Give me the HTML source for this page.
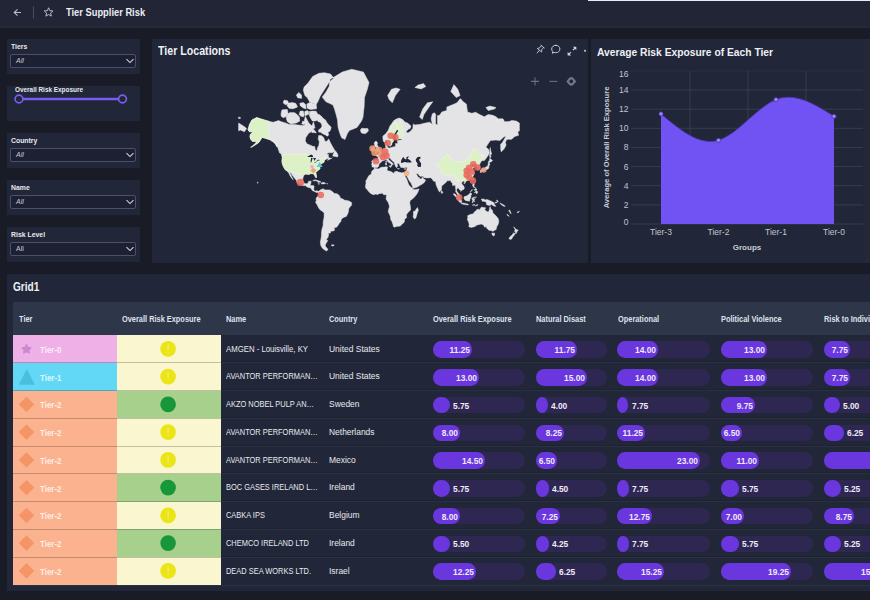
<!DOCTYPE html><html><head><meta charset="utf-8"><style>
*{margin:0;padding:0;box-sizing:border-box}
html,body{width:870px;height:600px;overflow:hidden;background:#191c26;font-family:"Liberation Sans", sans-serif;color:#e6e8ee}
.a{position:absolute}
svg text{font-family:"Liberation Sans",sans-serif}
.t{position:absolute;white-space:nowrap;transform-origin:0 50%}
</style></head><body><div class="a" style="left:0px;top:0px;width:870px;height:27px;background:#212535;"></div>
<div class="a" style="left:0px;top:26px;width:870px;height:1.5px;background:#262a36;"></div>
<div class="a" style="left:588px;top:0px;width:282px;height:1px;background:#e9ebf0;"></div>
<svg class="a" style="left:0;top:0" width="160" height="27">
<path d="M21 12.5 H14.5 M17.5 9.3 L14.2 12.5 L17.5 15.7" stroke="#b8bcc8" stroke-width="1.1" fill="none"/>
<line x1="33.5" y1="6.5" x2="33.5" y2="18.5" stroke="#4a4f60" stroke-width="1"/>
<path d="M48.60 7.80 L49.83 10.70 L52.97 10.98 L50.60 13.05 L51.30 16.12 L48.60 14.50 L45.90 16.12 L46.60 13.05 L44.23 10.98 L47.37 10.70 Z" stroke="#b8bcc8" stroke-width="1" fill="none" stroke-linejoin="round"/>
</svg>
<div class="t" style="left:65.8px;top:5.12px;font-size:11.8px;line-height:14.16px;font-weight:bold;font-style:normal;color:#eceef3;transform:scaleX(0.79);">Tier Supplier Risk</div>
<div class="a" style="left:7px;top:39px;width:133px;height:35px;background:#212638;"></div>
<div class="t" style="left:11px;top:41.70px;font-size:8px;line-height:9.60px;font-weight:bold;font-style:normal;color:#e8eaf0;transform:scaleX(0.86);">Tiers</div>
<div class="a" style="left:10px;top:54px;width:126px;height:14px;border:1px solid #4b5168;border-radius:2px;background:#1c2032"></div>
<div class="t" style="left:16px;top:57.10px;font-size:7px;line-height:8.40px;font-weight:normal;font-style:italic;color:#c9ccd6;">All</div>
<svg class="a" style="left:124px;top:57px" width="12" height="8"><path d="M2.5 2.2 L6 5.6 L9.5 2.2" stroke="#d0d3dc" stroke-width="1.1" fill="none"/></svg>
<div class="a" style="left:7px;top:86px;width:133px;height:35px;background:#212638;"></div>
<div class="t" style="left:14.7px;top:85.40px;font-size:8px;line-height:9.60px;font-weight:bold;font-style:normal;color:#e8eaf0;transform:scaleX(0.8);">Overall Risk Exposure</div>
<svg class="a" style="left:7px;top:86px" width="133" height="35">
<line x1="12" y1="13" x2="115.5" y2="13" stroke="#7a5cf0" stroke-width="2.6"/>
<circle cx="12" cy="13" r="3.9" fill="#212638" stroke="#7a5cf0" stroke-width="1.7"/>
<circle cx="115.5" cy="13" r="3.9" fill="#212638" stroke="#7a5cf0" stroke-width="1.7"/>
</svg>
<div class="a" style="left:7px;top:133px;width:133px;height:35px;background:#212638;"></div>
<div class="t" style="left:11px;top:135.70px;font-size:8px;line-height:9.60px;font-weight:bold;font-style:normal;color:#e8eaf0;transform:scaleX(0.86);">Country</div>
<div class="a" style="left:10px;top:148px;width:126px;height:14px;border:1px solid #4b5168;border-radius:2px;background:#1c2032"></div>
<div class="t" style="left:16px;top:151.10px;font-size:7px;line-height:8.40px;font-weight:normal;font-style:italic;color:#c9ccd6;">All</div>
<svg class="a" style="left:124px;top:151px" width="12" height="8"><path d="M2.5 2.2 L6 5.6 L9.5 2.2" stroke="#d0d3dc" stroke-width="1.1" fill="none"/></svg>
<div class="a" style="left:7px;top:180px;width:133px;height:35px;background:#212638;"></div>
<div class="t" style="left:11px;top:182.70px;font-size:8px;line-height:9.60px;font-weight:bold;font-style:normal;color:#e8eaf0;transform:scaleX(0.86);">Name</div>
<div class="a" style="left:10px;top:195px;width:126px;height:14px;border:1px solid #4b5168;border-radius:2px;background:#1c2032"></div>
<div class="t" style="left:16px;top:198.10px;font-size:7px;line-height:8.40px;font-weight:normal;font-style:italic;color:#c9ccd6;">All</div>
<svg class="a" style="left:124px;top:198px" width="12" height="8"><path d="M2.5 2.2 L6 5.6 L9.5 2.2" stroke="#d0d3dc" stroke-width="1.1" fill="none"/></svg>
<div class="a" style="left:7px;top:227px;width:133px;height:35px;background:#212638;"></div>
<div class="t" style="left:11px;top:229.70px;font-size:8px;line-height:9.60px;font-weight:bold;font-style:normal;color:#e8eaf0;transform:scaleX(0.86);">Risk Level</div>
<div class="a" style="left:10px;top:242px;width:126px;height:14px;border:1px solid #4b5168;border-radius:2px;background:#1c2032"></div>
<div class="t" style="left:16px;top:245.10px;font-size:7px;line-height:8.40px;font-weight:normal;font-style:normal;color:#c9ccd6;">All</div>
<svg class="a" style="left:124px;top:245px" width="12" height="8"><path d="M2.5 2.2 L6 5.6 L9.5 2.2" stroke="#d0d3dc" stroke-width="1.1" fill="none"/></svg>
<div class="a" style="left:152px;top:39px;width:436px;height:224px;background:#212638;"></div>
<div class="t" style="left:158.3px;top:43.20px;font-size:13px;line-height:15.60px;font-weight:bold;font-style:normal;color:#eef0f4;transform:scaleX(0.818);">Tier Locations</div>
<svg class="a" style="left:520px;top:38px" width="70" height="60">
<g stroke="#c8ccd6" stroke-width="1" fill="none" stroke-linejoin="round" stroke-linecap="round">
<g transform="translate(20,11.6) rotate(40) scale(0.85)"><path d="M-2.6,-4.6 H2.6 M-1.7,-4.6 V-1.2 L-3.3,1 H3.3 L1.7,-1.2 V-4.6 M0,1 V5.2"/></g>
<path d="M35.8,7.3 C38.3,7.3 39.9,9 39.9,11 C39.9,13.1 38.2,14.7 35.8,14.7 C35.2,14.7 34.6,14.6 34.1,14.4 L32.3,15.3 L32.8,13.6 C32.1,12.9 31.7,12 31.7,11 C31.7,9 33.3,7.3 35.8,7.3 Z"/>
</g>
<g stroke="#d0d3dc" stroke-width="1.2" fill="none">
<path d="M52.9,12.2 L55.3,9.8"/><path d="M48.5,16.6 L50.9,14.2"/>
</g>
<path d="M56.3,8.8 L56.3,12.3 L52.8,8.8 Z" fill="#d0d3dc"/>
<path d="M47.6,17.5 L47.6,14 L51.1,17.5 Z" fill="#d0d3dc"/>
<circle cx="65" cy="12.8" r="1" fill="#c8ccd6"/>
<g stroke="#6b7082" stroke-width="1.1" fill="none">
<path d="M11,43.4 H19 M15,39.4 V47.4"/>
<path d="M49.3,43.4 H57.3" transform="translate(-20,0)"/>
</g>
<path d="M46.3,43.4 L49,40 Q51.25,38.2 53.5,40 L56.2,43.4 L53.5,46.8 Q51.25,48.6 49,46.8 Z" fill="#70758a"/>
<circle cx="51.25" cy="43.4" r="1.8" fill="#212638"/>
</svg>
<svg class="a" style="left:0;top:0" width="870" height="270">
<path d="M248.0,129.8 L249.5,124.4 L251.9,120.0 L256.7,117.6 L260.4,118.8 L265.9,120.4 L269.0,121.3 L272.9,122.2 L274.9,121.8 L278.4,120.6 L281.5,121.8 L285.4,122.9 L289.3,124.6 L294.8,124.6 L297.9,125.0 L302.6,125.4 L304.9,125.0 L304.1,121.8 L305.3,116.3 L306.9,119.5 L308.8,122.9 L311.9,126.0 L313.5,121.8 L315.0,128.0 L312.7,129.0 L311.1,131.8 L308.4,133.6 L305.7,137.8 L305.3,140.9 L306.9,143.8 L310.4,145.2 L312.7,146.3 L314.8,146.6 L315.0,149.3 L317.0,151.2 L317.4,148.0 L318.9,145.2 L319.3,141.6 L318.2,139.3 L318.6,135.6 L321.3,135.6 L323.6,137.4 L324.8,140.9 L326.7,141.6 L328.7,138.9 L330.6,143.1 L332.2,145.9 L334.5,149.9 L335.3,151.2 L332.2,152.8 L328.3,152.8 L326.4,153.9 L328.7,154.4 L328.3,155.6 L328.6,157.5 L331.4,158.5 L332.2,157.7 L331.8,158.3 L327.5,160.3 L328.7,158.3 L326.7,158.8 L324.4,160.1 L323.9,162.4 L321.3,163.5 L320.1,165.6 L319.7,167.1 L320.1,168.8 L318.2,170.2 L315.8,172.3 L316.4,176.3 L316.3,177.9 L315.2,176.6 L314.3,174.5 L313.1,173.7 L309.6,173.5 L309.3,174.5 L305.7,174.0 L303.2,175.6 L302.9,178.1 L302.7,180.3 L304.1,183.1 L305.3,183.8 L308.0,183.4 L308.4,181.4 L311.1,181.0 L310.8,183.7 L310.1,185.6 L313.5,185.6 L314.1,186.4 L313.7,189.6 L315.0,191.2 L317.0,190.8 L318.6,191.4 L318.6,192.3 L316.6,192.5 L315.0,191.8 L312.2,190.4 L310.8,188.0 L307.6,187.2 L305.3,185.6 L303.7,185.8 L300.2,184.3 L296.7,182.3 L296.9,181.0 L295.9,179.8 L294.0,177.6 L292.4,175.6 L291.0,172.7 L289.7,172.3 L290.9,174.5 L291.6,176.8 L293.3,179.8 L291.6,178.2 L290.1,175.9 L289.3,174.1 L287.7,171.4 L285.0,169.5 L283.4,166.6 L282.3,163.7 L281.9,161.0 L282.3,157.5 L281.7,154.9 L283.1,154.8 L281.5,153.0 L279.2,151.8 L277.6,147.3 L275.3,143.8 L272.9,141.6 L269.8,139.7 L265.1,138.2 L262.0,137.4 L260.4,140.1 L258.9,142.4 L255.8,144.5 L252.6,146.6 L250.7,147.3 L252.6,145.9 L255.8,143.1 L256.5,141.3 L252.6,141.5 L250.7,139.3 L249.9,136.9 L250.3,134.4 L253.4,131.8 L249.5,131.8Z M322.4,96.8 L326.0,91.9 L329.1,86.5 L330.1,79.3 L336.1,75.8 L342.3,72.0 L351.7,69.3 L363.4,72.0 L369.0,82.6 L367.3,89.3 L364.5,97.5 L364.2,106.1 L363.0,117.1 L361.8,120.6 L359.5,123.9 L357.0,127.4 L353.3,129.0 L349.4,130.5 L347.4,133.6 L345.0,139.5 L341.6,137.8 L339.6,132.7 L338.1,127.4 L337.5,120.0 L336.1,114.6 L334.5,109.1 L333.0,105.1 L329.9,103.5 L326.0,101.8 L322.5,97.5Z M327.9,136.1 L328.7,134.4 L327.9,132.2 L329.9,131.2 L331.2,127.8 L330.2,126.0 L328.3,124.4 L326.4,121.8 L325.6,120.0 L323.6,118.8 L322.1,117.1 L319.7,114.8 L317.8,114.3 L316.2,111.3 L312.7,111.1 L309.2,111.6 L309.6,116.3 L311.1,119.0 L312.3,120.9 L315.0,121.1 L317.4,120.2 L318.2,121.8 L320.1,122.0 L321.7,124.4 L321.9,126.6 L320.5,128.6 L318.7,129.8 L318.6,132.0 L320.5,132.2 L323.2,134.1 L325.6,134.9 L326.7,136.0Z M333.8,78.2 L330.6,74.0 L324.4,72.7 L318.9,73.3 L312.7,76.4 L308.0,83.1 L304.1,87.0 L303.3,90.2 L304.9,95.6 L307.2,97.5 L309.6,101.8 L312.7,103.5 L316.6,103.8 L318.2,101.1 L320.1,96.4 L322.4,92.8 L325.2,88.4 L328.3,83.6 L331.4,79.9Z M316.6,108.8 L310.4,109.4 L307.2,108.2 L306.9,104.1 L309.6,102.5 L313.5,103.2 L316.2,103.8Z M299.8,121.1 L296.3,122.9 L290.9,123.9 L287.4,121.8 L286.2,118.3 L287.0,114.6 L290.1,112.4 L294.8,112.7 L297.1,114.6 L299.4,117.1Z M281.1,116.1 L283.1,117.8 L286.2,116.6 L288.1,113.8 L287.4,109.6 L284.6,109.4 L281.9,109.9 L281.1,113.3Z M297.5,107.0 L293.2,108.8 L289.3,108.5 L287.0,105.7 L287.7,103.2 L292.4,102.5 L295.9,103.5Z M303.7,116.8 L301.0,116.3 L299.1,114.6 L300.2,111.1 L303.3,111.1 L304.1,114.6Z M308.8,114.3 L304.9,115.8 L304.7,111.6 L307.2,110.5 L308.4,111.3Z M316.2,133.0 L313.9,132.5 L311.8,132.7 L311.9,130.1 L313.1,129.0 L315.4,131.2Z M306.1,108.8 L303.7,108.2 L300.2,105.7 L299.8,103.2 L303.3,102.5 L305.7,104.5Z M332.7,155.9 L337.7,156.9 L338.0,155.4 L337.3,153.6 L335.7,151.1 L334.1,152.2 L333.0,154.8Z M318.6,191.4 L320.1,190.0 L322.1,189.3 L323.2,188.5 L323.6,189.6 L326.0,190.0 L329.1,189.9 L330.8,190.4 L332.2,191.5 L334.5,193.5 L336.9,193.7 L338.8,194.9 L340.0,196.8 L340.4,198.2 L342.3,198.8 L344.7,200.2 L347.0,200.5 L349.0,201.1 L351.5,202.5 L351.7,204.9 L350.1,206.8 L348.7,208.8 L348.4,212.1 L347.4,214.5 L346.2,216.6 L343.9,217.2 L341.2,219.2 L341.0,221.4 L339.2,223.2 L337.7,226.0 L336.1,227.4 L334.1,227.4 L334.5,229.8 L334.1,230.8 L330.6,231.3 L330.5,232.9 L328.3,233.3 L328.7,234.7 L327.9,237.6 L326.4,239.3 L327.7,240.8 L326.0,243.4 L325.2,245.2 L325.6,246.5 L328.1,249.5 L326.5,251.0 L324.4,249.8 L322.4,248.2 L320.9,245.8 L320.3,242.2 L320.9,239.3 L321.4,236.0 L321.4,233.3 L321.8,229.8 L323.1,225.5 L323.2,221.4 L324.0,217.9 L324.2,212.9 L322.8,211.7 L319.7,209.4 L318.3,207.2 L317.0,204.5 L315.8,202.9 L315.7,201.6 L316.6,200.2 L315.9,199.0 L316.6,197.4 L317.5,196.8 L318.7,195.1 L318.6,193.1Z M374.4,168.3 L378.2,168.9 L381.3,167.3 L386.8,166.8 L387.6,167.1 L387.0,170.0 L387.7,170.7 L390.9,171.6 L393.8,173.4 L394.6,171.8 L396.9,171.3 L398.5,172.1 L401.6,172.8 L404.2,172.5 L405.7,172.5 L406.2,174.1 L405.8,175.6 L404.4,173.7 L405.1,176.3 L406.7,179.0 L408.1,183.1 L409.3,185.6 L411.0,187.2 L412.8,188.4 L412.7,189.2 L414.9,189.8 L419.0,188.9 L418.8,190.0 L417.2,193.5 L414.9,196.6 L412.5,199.0 L410.2,200.5 L409.7,202.9 L410.4,206.4 L410.6,210.0 L407.5,212.9 L406.3,215.0 L406.7,217.5 L404.6,219.2 L404.3,221.9 L402.4,224.1 L400.1,226.1 L396.2,226.5 L394.6,227.2 L393.4,226.5 L393.0,224.6 L391.9,221.5 L390.7,219.6 L390.3,216.2 L388.2,211.8 L388.8,208.8 L389.5,206.8 L388.5,202.9 L386.0,199.0 L386.4,196.2 L386.6,195.1 L385.6,194.7 L383.7,194.8 L382.5,193.3 L379.8,193.5 L377.4,194.5 L375.9,194.1 L373.1,194.8 L370.0,192.9 L368.7,191.5 L367.3,189.7 L366.0,188.4 L365.4,186.6 L366.1,182.7 L365.7,181.4 L367.5,178.1 L368.9,175.6 L371.2,174.3 L371.4,172.3 L372.4,170.6 L373.7,169.8Z M417.5,207.6 L418.4,210.4 L417.6,212.1 L416.4,216.2 L415.7,218.3 L414.1,218.8 L413.1,216.6 L413.6,214.1 L413.3,211.7 L415.3,210.7 L416.4,208.8Z M374.6,168.1 L373.9,167.3 L373.1,166.9 L372.0,167.1 L372.1,165.6 L371.6,164.6 L372.1,162.6 L371.7,161.0 L372.8,160.2 L375.9,160.6 L377.6,160.6 L378.1,158.8 L378.1,157.5 L377.1,156.2 L375.3,155.4 L376.7,154.5 L377.8,154.6 L377.8,153.4 L379.0,153.8 L380.2,152.8 L380.9,151.7 L382.1,151.2 L382.7,149.5 L383.7,148.6 L385.2,148.5 L385.8,147.3 L385.5,145.9 L385.4,143.8 L387.3,142.8 L387.1,145.0 L387.6,146.2 L387.2,147.4 L388.4,147.7 L389.9,148.1 L391.9,147.3 L393.4,146.9 L395.4,146.6 L395.5,144.5 L395.8,143.1 L396.9,143.8 L398.0,143.5 L397.3,141.6 L397.3,140.4 L400.8,140.1 L402.4,139.5 L401.6,139.0 L399.3,138.7 L396.8,139.3 L395.8,137.8 L396.0,135.3 L397.7,132.2 L398.7,130.9 L398.1,129.8 L396.6,129.8 L395.8,131.6 L394.6,133.2 L393.7,135.1 L393.0,137.8 L393.4,139.3 L393.4,140.9 L391.9,143.1 L391.5,145.0 L390.2,146.1 L389.1,145.8 L387.6,141.2 L387.2,140.1 L386.4,140.9 L384.5,142.4 L383.3,141.2 L382.9,138.6 L382.9,136.1 L384.5,134.8 L386.4,133.0 L388.4,129.9 L389.9,126.0 L391.5,123.9 L393.8,120.6 L396.9,118.8 L399.3,118.1 L401.2,118.8 L403.2,120.0 L404.7,122.0 L407.5,122.9 L411.0,126.0 L410.2,128.6 L408.6,129.0 L405.9,131.8 L407.9,132.9 L410.2,131.6 L412.8,128.6 L413.3,123.9 L414.9,125.0 L420.7,124.2 L424.2,123.3 L425.8,122.9 L429.7,122.2 L432.4,124.6 L431.1,118.8 L432.4,113.8 L434.4,112.7 L435.8,114.6 L435.6,118.3 L435.6,123.9 L437.5,125.0 L437.5,115.8 L439.8,115.1 L441.8,111.9 L446.7,110.5 L446.9,107.0 L453.1,104.5 L457.0,102.8 L460.4,98.6 L463.2,101.8 L466.4,104.1 L467.5,111.9 L471.8,113.3 L475.7,112.2 L479.6,114.6 L484.3,116.8 L488.2,114.6 L492.9,115.3 L496.0,116.8 L498.3,118.8 L503.0,118.8 L504.6,121.8 L509.3,121.5 L511.6,120.4 L516.3,121.1 L519.4,123.1 L519.4,130.9 L517.8,131.8 L518.6,135.3 L514.7,136.5 L511.6,139.3 L508.5,139.3 L506.5,139.7 L505.4,142.4 L506.1,145.0 L505.2,146.9 L503.8,149.3 L502.6,150.6 L501.2,151.8 L500.7,149.3 L500.6,144.3 L502.2,142.7 L503.8,140.1 L506.1,136.1 L503.8,136.9 L499.9,140.6 L496.0,140.1 L490.5,140.4 L488.6,143.1 L485.9,147.3 L488.6,149.3 L489.2,153.0 L488.4,155.1 L486.6,157.7 L484.5,160.4 L482.0,160.8 L480.9,161.6 L480.2,163.3 L479.2,165.5 L479.9,168.1 L479.6,168.9 L477.7,169.5 L477.5,167.6 L477.8,166.3 L476.7,166.3 L476.3,164.3 L474.4,163.6 L473.5,165.3 L473.8,163.3 L471.0,164.9 L471.7,166.5 L474.6,166.7 L473.0,168.1 L472.1,169.2 L473.2,171.4 L474.1,172.7 L474.2,173.7 L473.2,175.4 L472.2,177.6 L470.6,179.1 L468.1,180.3 L465.6,181.0 L465.0,182.0 L464.6,181.0 L463.2,181.0 L462.1,182.3 L461.5,183.1 L462.3,184.7 L463.8,186.0 L464.3,188.0 L464.0,189.2 L462.2,190.0 L460.7,191.5 L460.9,190.4 L459.3,189.6 L458.9,188.6 L457.7,187.7 L456.4,190.0 L457.2,191.7 L458.2,192.9 L459.7,194.5 L460.3,197.1 L459.7,197.2 L458.0,196.0 L457.2,193.9 L455.7,191.8 L455.8,189.6 L455.2,185.1 L452.6,185.6 L452.5,183.5 L451.0,181.7 L450.5,180.2 L449.2,180.8 L447.6,180.6 L446.8,181.6 L445.3,182.9 L443.2,184.7 L441.6,186.0 L441.6,188.0 L441.3,190.1 L439.4,191.9 L438.7,190.8 L437.5,188.1 L436.3,185.6 L435.8,183.1 L435.7,181.3 L434.0,181.4 L432.8,180.2 L432.4,179.2 L431.5,178.5 L430.9,177.7 L427.0,177.9 L423.7,177.4 L422.9,176.1 L421.1,176.6 L419.1,175.5 L418.2,173.8 L416.4,173.7 L416.4,174.3 L417.7,176.3 L418.6,178.1 L419.2,177.2 L419.6,178.9 L421.5,178.7 L422.9,176.9 L423.0,178.5 L424.6,179.2 L425.6,180.2 L424.6,181.9 L423.7,183.1 L421.9,184.3 L419.7,185.6 L416.8,187.2 L414.1,188.1 L412.9,188.2 L412.3,186.0 L411.0,183.1 L409.4,181.0 L407.9,178.1 L406.4,175.4 L406.2,174.1 L405.7,172.5 L406.3,170.9 L407.0,168.7 L407.2,167.5 L405.9,167.3 L404.0,167.9 L402.8,167.6 L400.8,167.4 L400.1,166.1 L399.4,164.6 L399.7,163.8 L397.3,163.6 L396.9,163.5 L397.7,166.1 L396.6,167.7 L395.5,166.3 L394.8,164.6 L394.1,162.2 L391.9,160.4 L390.3,158.6 L389.7,158.0 L388.6,158.6 L388.7,159.9 L389.6,160.4 L391.5,162.1 L393.4,164.0 L392.3,165.1 L391.9,165.8 L391.2,166.2 L391.3,164.6 L390.2,163.3 L388.8,162.4 L387.6,161.5 L387.0,160.3 L385.9,159.5 L384.9,160.1 L383.1,160.7 L381.5,161.0 L381.5,162.1 L379.8,163.1 L379.0,164.6 L378.8,165.4 L378.5,166.5 L377.4,167.4 L375.6,167.4Z M374.6,152.9 L376.7,152.3 L380.1,151.4 L380.3,149.7 L379.2,148.8 L378.6,147.3 L377.7,145.8 L377.1,144.8 L377.6,143.0 L376.4,141.3 L375.1,141.5 L374.2,143.1 L374.6,145.2 L375.2,146.9 L376.4,146.8 L376.7,148.4 L375.4,149.0 L375.7,150.2 L374.9,150.9 L376.7,151.6Z M374.3,150.3 L374.2,148.8 L374.7,147.3 L373.5,146.2 L372.4,147.3 L371.2,148.6 L371.4,150.6 L372.4,151.1Z M360.3,129.9 L361.8,128.2 L365.0,128.6 L367.7,128.4 L368.5,130.5 L367.3,132.2 L365.0,133.7 L361.4,133.0Z M387.6,95.6 L391.5,89.3 L396.2,88.0 L400.1,89.3 L395.4,95.6 L392.3,102.8 L389.1,99.4Z M419.6,117.1 L422.7,109.1 L427.4,102.8 L432.8,101.8 L429.7,106.1 L423.9,114.6 L422.3,119.5Z M450.8,91.5 L453.9,84.6 L457.8,89.3 L460.1,95.6 L456.2,97.5Z M485.9,107.6 L489.8,106.1 L496.0,107.6 L494.4,109.1 L488.2,110.5Z M414.9,87.5 L418.0,85.1 L423.5,83.6 L425.8,86.5 L421.1,88.9Z M489.9,157.7 L490.9,157.1 L490.5,154.2 L491.7,154.2 L490.5,149.9 L490.4,147.6 L489.9,149.3 L489.6,155.4Z M481.1,170.0 L484.3,170.4 L485.7,169.7 L488.0,169.0 L488.8,168.1 L489.0,165.8 L489.8,164.6 L489.3,162.6 L488.2,163.3 L488.0,165.1 L487.0,166.8 L485.6,166.9 L484.9,168.5 L482.7,168.5 L481.2,169.5Z M480.2,170.4 L481.2,170.1 L482.0,171.1 L481.3,172.5 L480.6,172.6 L480.2,171.2Z M482.4,170.9 L484.1,169.8 L484.1,170.6 L482.8,171.1Z M488.2,162.6 L489.1,162.2 L490.8,162.0 L492.5,160.7 L491.9,159.9 L489.8,158.3 L489.4,160.4 L488.4,161.5Z M473.4,177.8 L474.2,178.1 L473.2,180.6 L472.7,179.3Z M463.7,182.9 L465.2,182.1 L465.6,182.7 L464.4,183.8Z M441.3,190.6 L442.4,191.5 L442.8,192.7 L441.9,193.6 L441.2,192.7Z M473.0,183.5 L474.3,183.5 L474.2,185.1 L473.8,186.4 L475.7,188.0 L474.6,187.6 L473.4,187.2 L472.6,185.6Z M474.2,192.7 L476.5,190.8 L477.7,191.7 L477.3,193.3 L476.5,193.7 L475.3,192.3Z M474.2,189.6 L476.1,188.4 L476.9,189.6 L475.7,190.4 L474.9,190.8Z M470.4,191.7 L472.2,189.4 L472.4,190.0 L470.6,191.9Z M464.0,197.0 L464.5,196.6 L465.7,196.2 L467.1,195.7 L469.1,194.3 L470.3,192.7 L472.0,194.1 L471.0,194.7 L470.8,197.4 L469.9,199.4 L469.5,201.2 L468.3,201.0 L465.6,200.5 L465.0,200.2 L464.0,198.6Z M453.3,193.8 L455.1,194.1 L457.3,196.5 L460.0,198.6 L461.7,200.5 L461.5,202.7 L460.5,202.7 L458.7,201.3 L457.4,199.0 L456.0,196.9 L453.9,195.1Z M461.1,203.5 L463.2,203.1 L465.2,203.5 L468.3,204.2 L468.2,205.0 L464.8,204.5 L462.1,204.0Z M472.2,202.5 L472.8,200.5 L471.8,198.6 L472.8,197.7 L476.1,197.2 L476.5,197.0 L473.4,197.4 L473.4,199.0 L475.3,198.8 L473.8,199.7 L474.8,201.9 L473.6,200.5 L473.0,202.6Z M481.2,199.2 L483.5,198.9 L485.1,200.0 L486.6,199.4 L489.0,200.2 L492.7,201.9 L494.1,203.0 L494.4,204.5 L496.0,206.3 L493.7,206.0 L491.3,204.3 L490.1,205.5 L488.6,205.2 L486.6,204.7 L486.2,202.1 L483.9,201.3 L482.4,201.3 L482.0,200.4Z M476.1,204.9 L478.2,204.8 L476.5,205.6 L475.3,206.2Z M472.4,204.9 L474.9,204.6 L474.8,205.1 L472.6,205.2Z M494.8,202.5 L496.4,202.1 L497.6,201.5 L497.2,202.5 L495.2,203.0Z M467.5,215.8 L468.1,215.6 L470.0,214.6 L473.4,213.7 L474.3,212.1 L475.7,211.1 L476.9,209.6 L478.4,209.2 L480.0,209.9 L480.4,208.3 L481.6,207.1 L483.1,207.5 L485.7,207.8 L485.1,208.8 L484.7,210.0 L486.2,211.0 L488.2,212.2 L489.4,210.0 L489.6,208.0 L490.1,206.6 L490.9,209.2 L492.3,210.0 L492.9,212.9 L495.2,215.0 L496.6,216.6 L498.3,218.8 L498.8,221.5 L498.3,224.1 L496.9,226.4 L496.0,229.8 L494.1,230.3 L493.1,231.4 L491.3,230.6 L489.0,230.3 L487.8,229.3 L486.6,227.9 L486.2,226.0 L485.1,227.4 L484.5,226.9 L483.5,225.0 L481.2,224.1 L478.1,224.8 L475.7,225.5 L475.3,226.4 L471.4,227.4 L468.8,226.7 L469.2,224.6 L468.7,222.3 L467.3,219.3 L467.9,217.5Z M491.8,233.0 L494.7,233.2 L494.4,235.4 L493.5,236.1 L492.3,234.9Z M513.7,226.8 L515.1,228.3 L516.2,229.6 L518.2,230.0 L517.1,231.6 L516.3,233.5 L515.3,233.6 L515.5,231.8 L514.6,231.5 L515.1,229.3Z M513.8,232.8 L515.0,233.8 L514.1,235.4 L512.6,237.0 L512.0,238.7 L510.4,239.4 L508.9,238.7 L510.2,236.5 L512.0,235.2 L513.2,233.3Z M312.7,180.7 L315.0,179.7 L318.6,180.8 L321.1,182.1 L318.6,182.4 L316.2,180.8 L313.5,180.7Z M321.0,183.5 L322.2,182.4 L324.4,182.5 L325.6,183.4 L323.6,183.9 L321.0,183.8Z M317.9,183.6 L319.6,183.9 L318.8,184.2Z M326.6,183.5 L327.8,183.7 L327.4,184.0Z M278.9,152.1 L281.5,153.0 L282.8,154.9 L281.7,154.7Z M388.7,166.0 L391.2,165.8 L390.8,167.4Z M385.4,163.1 L386.6,163.1 L386.5,165.1 L385.6,165.1Z M385.7,161.0 L386.4,161.1 L386.2,162.7Z M397.3,168.5 L399.5,168.7 L398.3,169.1Z M404.2,169.0 L405.9,168.5 L405.4,169.4Z M257.3,182.0 L258.3,182.7 L257.5,183.2Z M238.6,123.1 L242.5,125.4 L245.2,127.2 L246.6,128.8 L245.6,129.9 L244.4,131.8 L242.5,130.9 L240.2,129.9 L238.6,130.9Z M238.6,117.1 L240.5,117.6 L240.2,118.5 L238.6,118.5Z M288.5,103.5 L285.4,104.8 L283.1,102.8 L284.2,100.1 L287.7,100.8Z M301.8,98.3 L297.9,97.9 L296.3,95.2 L298.7,92.4 L301.4,94.8Z M304.1,124.4 L301.8,123.9 L302.6,121.1 L304.5,121.8Z M499.9,202.9 L501.9,204.1 L504.2,205.2 L505.2,206.4 L503.4,206.0 L501.1,204.5Z M508.9,209.9 L509.6,210.0 L510.4,211.7 L511.2,213.7 L510.4,213.3 L509.1,211.3Z M506.9,214.2 L508.1,215.0 L509.3,216.2 L508.9,216.3 L507.3,215.2Z M517.2,212.0 L518.3,211.7 L519.4,211.1 L519.0,211.7 L518.2,212.7 L517.3,212.6Z M496.4,200.0 L497.6,200.5 L498.3,201.7 L497.9,201.9 L496.8,200.8Z M331.2,245.0 L333.8,244.8 L333.9,245.7 L332.2,246.1Z" fill="#e4e4e6" stroke="#e4e4e6" stroke-width="0.5" stroke-linejoin="round"/>
<path d="M283.1,154.2 L304.9,154.2 L304.9,153.8 L309.2,155.4 L313.1,157.1 L314.6,158.5 L314.6,161.5 L317.4,161.2 L319.7,159.9 L320.7,158.8 L323.2,158.8 L324.4,157.1 L325.0,156.1 L326.1,156.5 L326.7,158.8 L324.4,160.1 L323.9,162.4 L321.3,163.5 L320.1,165.6 L319.7,167.1 L320.1,168.8 L318.2,170.2 L315.8,172.3 L316.4,176.3 L316.3,177.9 L315.2,176.6 L314.3,174.5 L313.1,173.7 L309.6,173.5 L309.3,174.5 L305.7,174.0 L303.2,175.6 L303.2,177.3 L301.4,175.9 L299.8,173.8 L298.7,174.5 L297.5,174.0 L295.9,172.0 L294.6,172.5 L292.4,172.5 L289.5,171.4 L287.7,171.4 L285.0,169.5 L283.4,166.6 L282.3,163.7 L281.9,161.0 L282.3,157.5 L281.7,154.9Z M248.0,129.8 L249.5,124.4 L251.9,120.0 L256.7,117.6 L260.4,118.8 L265.9,120.4 L269.0,121.3 L269.0,138.9 L271.8,140.9 L273.7,139.7 L277.2,145.2 L276.8,147.0 L275.3,143.8 L272.9,141.6 L269.8,139.7 L265.1,138.2 L262.0,137.4 L260.4,140.1 L258.9,142.4 L255.8,144.5 L252.6,146.6 L250.7,147.3 L252.6,145.9 L255.8,143.1 L256.5,141.3 L252.6,141.5 L250.7,139.3 L249.9,136.9 L250.3,134.4 L253.4,131.8 L249.5,131.8Z M387.6,141.2 L388.4,139.5 L388.8,136.9 L388.4,133.6 L390.3,129.9 L391.9,126.0 L394.6,122.7 L397.3,125.6 L398.1,129.4 L396.2,129.4 L395.4,131.8 L393.8,133.6 L392.6,135.3 L392.4,137.8 L393.4,139.3 L393.4,140.9 L391.9,143.1 L391.5,145.0 L390.2,146.1 L389.1,145.8Z M395.8,138.4 L396.8,139.5 L399.3,138.7 L400.7,138.6 L402.0,136.9 L403.6,134.6 L402.4,132.7 L402.3,127.4 L401.9,125.0 L401.2,122.9 L401.5,121.1 L400.1,120.4 L398.9,122.9 L397.3,123.9 L395.4,122.7 L397.3,125.6 L398.1,129.8 L398.7,130.9 L397.7,132.2 L396.0,135.3 L395.8,137.8Z M476.3,164.3 L477.3,163.1 L478.8,162.0 L480.8,161.5 L481.2,159.0 L482.7,158.8 L484.3,154.9 L482.0,155.8 L479.2,153.6 L478.1,153.0 L476.9,149.5 L473.0,148.9 L472.2,153.0 L470.3,153.4 L469.5,155.4 L471.4,156.6 L472.2,157.1 L470.3,157.2 L467.1,159.0 L465.6,160.6 L461.7,162.0 L457.0,161.5 L454.3,161.2 L453.1,159.6 L450.0,158.6 L449.6,156.0 L447.5,154.1 L445.7,156.6 L443.7,156.3 L443.4,158.3 L441.4,158.8 L441.6,161.0 L439.1,163.1 L436.7,164.1 L436.4,164.8 L437.5,166.6 L437.3,167.1 L439.7,168.5 L440.6,169.5 L440.4,171.4 L440.6,172.7 L442.3,173.6 L445.3,175.1 L447.6,175.5 L448.4,176.1 L450.8,175.8 L453.5,174.5 L455.1,175.0 L455.8,178.1 L455.1,179.0 L456.2,180.5 L458.2,181.3 L458.6,180.3 L460.9,179.8 L462.2,179.9 L463.2,181.0 L464.6,181.0 L465.0,182.0 L465.6,181.0 L468.1,180.3 L470.6,179.1 L472.2,177.6 L473.2,175.4 L474.2,173.7 L474.1,172.7 L473.2,171.4 L472.1,169.2 L473.0,168.1 L474.6,166.7 L471.7,166.5 L471.0,164.9 L473.8,163.3 L473.5,165.3 L474.4,163.6Z" fill="#dcf2c6" stroke="#f4f4f4" stroke-width="0.4"/>
<path d="M415.7,159.4 L417.6,157.1 L420.3,156.8 L420.5,158.5 L418.9,159.4 L420.1,162.0 L421.1,163.3 L421.0,166.8 L418.4,167.1 L417.2,165.8 L417.6,163.6 L416.1,161.5Z M400.8,162.2 L401.6,162.9 L404.7,162.0 L407.1,162.5 L411.4,162.6 L411.4,161.5 L409.8,159.9 L408.2,159.0 L407.5,158.5 L406.7,158.6 L405.1,159.4 L404.4,158.3 L403.3,157.0 L402.4,157.9 L402.1,158.7 L401.3,160.1Z M406.3,158.3 L407.5,158.5 L408.8,156.8 L409.6,156.3 L406.5,157.1Z M307.2,156.9 L309.2,155.4 L311.9,154.5 L312.9,156.0 L313.1,157.1 L310.4,157.1Z M310.5,162.4 L311.1,157.7 L312.7,157.9 L311.5,162.0Z M312.9,157.7 L314.8,161.0 L315.3,159.4 L316.2,158.3Z M313.9,162.4 L317.4,161.2 L317.0,161.7 L315.0,162.7Z M316.8,160.7 L319.6,160.4 L319.3,159.7 L317.0,160.1Z" fill="#212638"/>
<circle cx="372.5" cy="148.5" r="3.2" fill="#f09a6e" fill-opacity="0.88"/>
<circle cx="374.5" cy="152.8" r="3.2" fill="#f09a6e" fill-opacity="0.88"/>
<circle cx="379.3" cy="150" r="3.2" fill="#f09a6e" fill-opacity="0.88"/>
<circle cx="380.8" cy="154.5" r="3.0" fill="#f09a6e" fill-opacity="0.88"/>
<circle cx="390.7" cy="135.7" r="3.3" fill="#e96a5f" fill-opacity="0.88"/>
<circle cx="395.3" cy="137.3" r="3.3" fill="#e96a5f" fill-opacity="0.88"/>
<circle cx="387.7" cy="143" r="3.3" fill="#e96a5f" fill-opacity="0.88"/>
<circle cx="385" cy="151.7" r="3.5" fill="#e96a5f" fill-opacity="0.88"/>
<circle cx="386.3" cy="155.7" r="3.5" fill="#e96a5f" fill-opacity="0.88"/>
<circle cx="383" cy="157" r="3.3" fill="#e96a5f" fill-opacity="0.88"/>
<circle cx="376" cy="161.3" r="3.3" fill="#e96a5f" fill-opacity="0.88"/>
<circle cx="406.7" cy="173.3" r="2.8" fill="#f2ad82" fill-opacity="0.88"/>
<circle cx="473.3" cy="164.2" r="3.3" fill="#e96a5f" fill-opacity="0.88"/>
<circle cx="477.5" cy="167.5" r="3.3" fill="#e96a5f" fill-opacity="0.88"/>
<circle cx="469.2" cy="167.9" r="3.3" fill="#e96a5f" fill-opacity="0.88"/>
<circle cx="466.7" cy="170.8" r="3.3" fill="#e96a5f" fill-opacity="0.88"/>
<circle cx="471.7" cy="171.7" r="3.3" fill="#e96a5f" fill-opacity="0.88"/>
<circle cx="466.7" cy="175" r="3.3" fill="#e96a5f" fill-opacity="0.88"/>
<circle cx="469.2" cy="177.5" r="3.3" fill="#e96a5f" fill-opacity="0.88"/>
<circle cx="472.9" cy="180.8" r="3.3" fill="#e96a5f" fill-opacity="0.88"/>
<circle cx="483.8" cy="170" r="2.8" fill="#f2a07a" fill-opacity="0.88"/>
<circle cx="459.2" cy="197.5" r="3.3" fill="#e96a5f" fill-opacity="0.88"/>
<circle cx="320.8" cy="195" r="3.3" fill="#e96a5f" fill-opacity="0.88"/>
<circle cx="300.4" cy="182.4" r="3.7" fill="#e96a5f" fill-opacity="0.88"/>
<polygon points="312.00,163.90 312.76,165.65 314.66,165.83 313.24,167.10 313.65,168.97 312.00,168.00 310.35,168.97 310.76,167.10 309.34,165.83 311.24,165.65" fill="#e9a6d8"/>
<polygon points="313.3,167.4 316.3,170.4 313.3,173.4 310.3,170.4" fill="#f2a070"/>
<polygon points="319.6,161.8 322.6,167 316.6,167" fill="#5cc8e4"/>
</svg>
<div class="a" style="left:591px;top:39px;width:279px;height:224px;background:#212638;"></div>
<div class="a" style="left:865px;top:39px;width:5px;height:224px;background:#242837;"></div>
<div class="t" style="left:597px;top:45.60px;font-size:11px;line-height:13.20px;font-weight:bold;font-style:normal;color:#eef0f4;transform:scaleX(0.935);">Average Risk Exposure of Each Tier</div>
<svg class="a" style="left:0;top:0" width="870" height="270">
<line x1="631" y1="224.0" x2="863" y2="224.0" stroke="#373d4e" stroke-width="1"/>
<text x="628.5" y="225.0" font-size="8.5" fill="#c2c6d0" text-anchor="end">0</text>
<line x1="631" y1="204.9" x2="863" y2="204.9" stroke="#373d4e" stroke-width="1"/>
<text x="628.5" y="207.9" font-size="8.5" fill="#c2c6d0" text-anchor="end">2</text>
<line x1="631" y1="185.7" x2="863" y2="185.7" stroke="#373d4e" stroke-width="1"/>
<text x="628.5" y="188.7" font-size="8.5" fill="#c2c6d0" text-anchor="end">4</text>
<line x1="631" y1="166.6" x2="863" y2="166.6" stroke="#373d4e" stroke-width="1"/>
<text x="628.5" y="169.6" font-size="8.5" fill="#c2c6d0" text-anchor="end">6</text>
<line x1="631" y1="147.4" x2="863" y2="147.4" stroke="#373d4e" stroke-width="1"/>
<text x="628.5" y="150.4" font-size="8.5" fill="#c2c6d0" text-anchor="end">8</text>
<line x1="631" y1="128.3" x2="863" y2="128.3" stroke="#373d4e" stroke-width="1"/>
<text x="628.5" y="131.3" font-size="8.5" fill="#c2c6d0" text-anchor="end">10</text>
<line x1="631" y1="109.2" x2="863" y2="109.2" stroke="#373d4e" stroke-width="1"/>
<text x="628.5" y="112.2" font-size="8.5" fill="#c2c6d0" text-anchor="end">12</text>
<line x1="631" y1="90.0" x2="863" y2="90.0" stroke="#373d4e" stroke-width="1"/>
<text x="628.5" y="93.0" font-size="8.5" fill="#c2c6d0" text-anchor="end">14</text>
<line x1="631" y1="70.9" x2="863" y2="70.9" stroke="#2c3142" stroke-width="1"/>
<text x="628.5" y="77.2" font-size="8.5" fill="#c2c6d0" text-anchor="end">16</text>
<line x1="690" y1="70.9" x2="690" y2="224.0" stroke="#373d4e" stroke-width="1"/>
<line x1="748" y1="70.9" x2="748" y2="224.0" stroke="#373d4e" stroke-width="1"/>
<line x1="806" y1="70.9" x2="806" y2="224.0" stroke="#373d4e" stroke-width="1"/>
<path d="M661.00,113.94 C680.17,129.94 699.33,145.93 718.50,140.26 C737.67,134.60 756.83,107.27 776.00,99.59 C795.33,91.84 814.67,104.09 834.00,116.34 L834,224.0 L661,224.0 Z" fill="#7152f3"/>
<path d="M661.00,113.94 C680.17,129.94 699.33,145.93 718.50,140.26 C737.67,134.60 756.83,107.27 776.00,99.59 C795.33,91.84 814.67,104.09 834.00,116.34" fill="none" stroke="#4a36a8" stroke-width="0.8"/>
<circle cx="661" cy="113.9" r="2.1" fill="#9a86f6" stroke="#3d2f8f" stroke-width="0.7"/>
<circle cx="718.5" cy="140.3" r="2.1" fill="#9a86f6" stroke="#3d2f8f" stroke-width="0.7"/>
<circle cx="776" cy="99.6" r="2.1" fill="#9a86f6" stroke="#3d2f8f" stroke-width="0.7"/>
<circle cx="834" cy="116.3" r="2.1" fill="#9a86f6" stroke="#3d2f8f" stroke-width="0.7"/>
<text x="661" y="235" font-size="8.5" fill="#c2c6d0" text-anchor="middle">Tier-3</text>
<text x="718.5" y="235" font-size="8.5" fill="#c2c6d0" text-anchor="middle">Tier-2</text>
<text x="776" y="235" font-size="8.5" fill="#c2c6d0" text-anchor="middle">Tier-1</text>
<text x="834" y="235" font-size="8.5" fill="#c2c6d0" text-anchor="middle">Tier-0</text>
<text x="747" y="249.5" font-size="8" font-weight="bold" fill="#c8ccd6" text-anchor="middle">Groups</text>
<text transform="translate(609,147.5) rotate(-90)" font-size="7.6" font-weight="bold" fill="#c8ccd6" text-anchor="middle">Average of Overall Risk Exposure</text>
</svg>
<div class="a" style="left:7px;top:274px;width:863px;height:317px;background:#212638;"></div>
<div class="t" style="left:12.7px;top:279.32px;font-size:12.8px;line-height:15.36px;font-weight:bold;font-style:normal;color:#eef0f4;transform:scaleX(0.79);">Grid1</div>
<div class="a" style="left:13px;top:302px;width:857px;height:33px;background:#2e364a;"></div>
<div class="t" style="left:18.5px;top:313.70px;font-size:8.5px;line-height:10.20px;font-weight:bold;font-style:normal;color:#dfe2ea;transform:scaleX(0.87);">Tier</div>
<div class="t" style="left:121.5px;top:313.70px;font-size:8.5px;line-height:10.20px;font-weight:bold;font-style:normal;color:#dfe2ea;transform:scaleX(0.87);">Overall Risk Exposure</div>
<div class="t" style="left:225.5px;top:313.70px;font-size:8.5px;line-height:10.20px;font-weight:bold;font-style:normal;color:#dfe2ea;transform:scaleX(0.87);">Name</div>
<div class="t" style="left:328.5px;top:313.70px;font-size:8.5px;line-height:10.20px;font-weight:bold;font-style:normal;color:#dfe2ea;transform:scaleX(0.87);">Country</div>
<div class="t" style="left:432.5px;top:313.70px;font-size:8.5px;line-height:10.20px;font-weight:bold;font-style:normal;color:#dfe2ea;transform:scaleX(0.87);">Overall Risk Exposure</div>
<div class="t" style="left:536px;top:313.70px;font-size:8.5px;line-height:10.20px;font-weight:bold;font-style:normal;color:#dfe2ea;transform:scaleX(0.87);">Natural Disast</div>
<div class="t" style="left:617.5px;top:313.70px;font-size:8.5px;line-height:10.20px;font-weight:bold;font-style:normal;color:#dfe2ea;transform:scaleX(0.87);">Operational</div>
<div class="t" style="left:720.5px;top:313.70px;font-size:8.5px;line-height:10.20px;font-weight:bold;font-style:normal;color:#dfe2ea;transform:scaleX(0.87);">Political Violence</div>
<div class="t" style="left:824px;top:313.70px;font-size:8.5px;line-height:10.20px;font-weight:bold;font-style:normal;color:#dfe2ea;transform:scaleX(0.87);">Risk to Individuals</div>
<div class="a" style="left:13px;top:335px;width:857px;height:250px;background:#212638;"></div>
<div class="a" style="left:13px;top:335.00px;width:104px;height:27.75px;background:#efb0e8;"></div>
<div class="a" style="left:117px;top:335.00px;width:103.5px;height:27.75px;background:#faf6cf;"></div>
<svg class="a" style="left:0;top:0;overflow:visible" width="1" height="1"><polygon points="26.50,344.57 27.97,347.25 30.97,347.82 28.88,350.05 29.26,353.08 26.50,351.77 23.74,353.08 24.12,350.05 22.03,347.82 25.03,347.25" fill="#c88ad0" stroke="#c88ad0" stroke-width="1.2" stroke-linejoin="round"/></svg>
<div class="t" style="left:40.4px;top:344.98px;font-size:9px;line-height:10.80px;font-weight:bold;font-style:normal;color:rgba(255,255,255,0.8);transform:scaleX(0.88);">Tier-0</div>
<svg class="a" style="left:0;top:0;overflow:visible" width="1" height="1"><circle cx="168.1" cy="348.88" r="7.8" fill="#ebe516"/><line x1="168.1" y1="344.38" x2="168.1" y2="350.07" stroke="#f2ee96" stroke-width="1"/><circle cx="168.1" cy="352.18" r="0.6" fill="#f2ee96"/></svg>
<div class="t" style="left:225.7px;top:342.62px;font-size:9.6px;line-height:11.52px;font-weight:normal;font-style:normal;color:#e8eaf0;transform:scaleX(0.81);">AMGEN - Louisville, KY</div>
<div class="t" style="left:328.7px;top:342.62px;font-size:9.6px;line-height:11.52px;font-weight:normal;font-style:normal;color:#e8eaf0;transform:scaleX(0.88);">United States</div>
<div class="a" style="left:432.7px;top:341.48px;width:92.6px;height:16.4px;border-radius:8.2px;background:#2e2752"></div>
<div class="a" style="left:432.7px;top:341.48px;width:39.7px;height:16.4px;border-radius:8.2px;background:#6a36de"></div>
<div class="t" style="left:390.40px;width:80px;text-align:right;top:345.06px;font-size:9.2px;line-height:11.04px;font-weight:bold;color:#eeeaf8;transform:scaleX(0.91);transform-origin:100% 50%">11.25</div>
<div class="a" style="left:536.1px;top:341.48px;width:70.8px;height:16.4px;border-radius:8.2px;background:#2e2752"></div>
<div class="a" style="left:536.1px;top:341.48px;width:41.1px;height:16.4px;border-radius:8.2px;background:#6a36de"></div>
<div class="t" style="left:495.20px;width:80px;text-align:right;top:345.06px;font-size:9.2px;line-height:11.04px;font-weight:bold;color:#eeeaf8;transform:scaleX(0.91);transform-origin:100% 50%">11.75</div>
<div class="a" style="left:617.3px;top:341.48px;width:92.4px;height:16.4px;border-radius:8.2px;background:#2e2752"></div>
<div class="a" style="left:617.3px;top:341.48px;width:40.9px;height:16.4px;border-radius:8.2px;background:#6a36de"></div>
<div class="t" style="left:576.20px;width:80px;text-align:right;top:345.06px;font-size:9.2px;line-height:11.04px;font-weight:bold;color:#eeeaf8;transform:scaleX(0.91);transform-origin:100% 50%">14.00</div>
<div class="a" style="left:720.7px;top:341.48px;width:92.5px;height:16.4px;border-radius:8.2px;background:#2e2752"></div>
<div class="a" style="left:720.7px;top:341.48px;width:46.6px;height:16.4px;border-radius:8.2px;background:#6a36de"></div>
<div class="t" style="left:685.30px;width:80px;text-align:right;top:345.06px;font-size:9.2px;line-height:11.04px;font-weight:bold;color:#eeeaf8;transform:scaleX(0.91);transform-origin:100% 50%">13.00</div>
<div class="a" style="left:824.3px;top:341.48px;width:92px;height:16.4px;border-radius:8.2px;background:#2e2752"></div>
<div class="a" style="left:824.3px;top:341.48px;width:25.8px;height:16.4px;border-radius:8.2px;background:#6a36de"></div>
<div class="t" style="left:768.10px;width:80px;text-align:right;top:345.06px;font-size:9.2px;line-height:11.04px;font-weight:bold;color:#eeeaf8;transform:scaleX(0.91);transform-origin:100% 50%">7.75</div>
<div class="a" style="left:13px;top:362.75px;width:104px;height:27.75px;background:#62d8f6;"></div>
<div class="a" style="left:117px;top:362.75px;width:103.5px;height:27.75px;background:#faf6cf;"></div>
<div class="a" style="left:13px;top:362.25px;width:207.5px;height:1px;background:rgba(0,0,0,0.22);"></div>
<div class="a" style="left:220.5px;top:361.25px;width:650px;height:1px;background:#1d2130;"></div>
<div class="a" style="left:220.5px;top:362.25px;width:650px;height:1px;background:#2b3143;"></div>
<svg class="a" style="left:0;top:0;overflow:visible" width="1" height="1"><polygon points="26.8,369.12 34.8,384.82 18.8,384.82" fill="#48bfdd"/></svg>
<div class="t" style="left:40.4px;top:372.73px;font-size:9px;line-height:10.80px;font-weight:bold;font-style:normal;color:rgba(255,255,255,0.8);transform:scaleX(0.88);">Tier-1</div>
<svg class="a" style="left:0;top:0;overflow:visible" width="1" height="1"><circle cx="168.1" cy="376.62" r="7.8" fill="#ebe516"/><line x1="168.1" y1="372.12" x2="168.1" y2="377.82" stroke="#f2ee96" stroke-width="1"/><circle cx="168.1" cy="379.93" r="0.6" fill="#f2ee96"/></svg>
<div class="t" style="left:225.7px;top:370.37px;font-size:9.6px;line-height:11.52px;font-weight:normal;font-style:normal;color:#e8eaf0;transform:scaleX(0.775);">AVANTOR PERFORMAN…</div>
<div class="t" style="left:328.7px;top:370.37px;font-size:9.6px;line-height:11.52px;font-weight:normal;font-style:normal;color:#e8eaf0;transform:scaleX(0.88);">United States</div>
<div class="a" style="left:432.7px;top:369.23px;width:92.6px;height:16.4px;border-radius:8.2px;background:#2e2752"></div>
<div class="a" style="left:432.7px;top:369.23px;width:46px;height:16.4px;border-radius:8.2px;background:#6a36de"></div>
<div class="t" style="left:396.70px;width:80px;text-align:right;top:372.81px;font-size:9.2px;line-height:11.04px;font-weight:bold;color:#eeeaf8;transform:scaleX(0.91);transform-origin:100% 50%">13.00</div>
<div class="a" style="left:536.1px;top:369.23px;width:70.8px;height:16.4px;border-radius:8.2px;background:#2e2752"></div>
<div class="a" style="left:536.1px;top:369.23px;width:51.3px;height:16.4px;border-radius:8.2px;background:#6a36de"></div>
<div class="t" style="left:505.40px;width:80px;text-align:right;top:372.81px;font-size:9.2px;line-height:11.04px;font-weight:bold;color:#eeeaf8;transform:scaleX(0.91);transform-origin:100% 50%">15.00</div>
<div class="a" style="left:617.3px;top:369.23px;width:92.4px;height:16.4px;border-radius:8.2px;background:#2e2752"></div>
<div class="a" style="left:617.3px;top:369.23px;width:40.9px;height:16.4px;border-radius:8.2px;background:#6a36de"></div>
<div class="t" style="left:576.20px;width:80px;text-align:right;top:372.81px;font-size:9.2px;line-height:11.04px;font-weight:bold;color:#eeeaf8;transform:scaleX(0.91);transform-origin:100% 50%">14.00</div>
<div class="a" style="left:720.7px;top:369.23px;width:92.5px;height:16.4px;border-radius:8.2px;background:#2e2752"></div>
<div class="a" style="left:720.7px;top:369.23px;width:46.6px;height:16.4px;border-radius:8.2px;background:#6a36de"></div>
<div class="t" style="left:685.30px;width:80px;text-align:right;top:372.81px;font-size:9.2px;line-height:11.04px;font-weight:bold;color:#eeeaf8;transform:scaleX(0.91);transform-origin:100% 50%">13.00</div>
<div class="a" style="left:824.3px;top:369.23px;width:92px;height:16.4px;border-radius:8.2px;background:#2e2752"></div>
<div class="a" style="left:824.3px;top:369.23px;width:25.8px;height:16.4px;border-radius:8.2px;background:#6a36de"></div>
<div class="t" style="left:768.10px;width:80px;text-align:right;top:372.81px;font-size:9.2px;line-height:11.04px;font-weight:bold;color:#eeeaf8;transform:scaleX(0.91);transform-origin:100% 50%">7.75</div>
<div class="a" style="left:13px;top:390.50px;width:104px;height:27.75px;background:#fbb28e;"></div>
<div class="a" style="left:117px;top:390.50px;width:103.5px;height:27.75px;background:#a7d08c;"></div>
<div class="a" style="left:13px;top:390.00px;width:207.5px;height:1px;background:rgba(0,0,0,0.22);"></div>
<div class="a" style="left:220.5px;top:389.00px;width:650px;height:1px;background:#1d2130;"></div>
<div class="a" style="left:220.5px;top:390.00px;width:650px;height:1px;background:#2b3143;"></div>
<svg class="a" style="left:0;top:0;overflow:visible" width="1" height="1"><polygon points="26.5,397.07 33.8,404.38 26.5,411.68 19.2,404.38" fill="#f59466" stroke="#f59466" stroke-width="0.8" stroke-linejoin="round"/></svg>
<div class="t" style="left:40.4px;top:400.48px;font-size:9px;line-height:10.80px;font-weight:bold;font-style:normal;color:rgba(255,255,255,0.8);transform:scaleX(0.88);">Tier-2</div>
<svg class="a" style="left:0;top:0;overflow:visible" width="1" height="1"><circle cx="168.1" cy="404.38" r="7.8" fill="#17963a"/></svg>
<div class="t" style="left:225.7px;top:398.12px;font-size:9.6px;line-height:11.52px;font-weight:normal;font-style:normal;color:#e8eaf0;transform:scaleX(0.775);">AKZO NOBEL PULP AN…</div>
<div class="t" style="left:328.7px;top:398.12px;font-size:9.6px;line-height:11.52px;font-weight:normal;font-style:normal;color:#e8eaf0;transform:scaleX(0.88);">Sweden</div>
<div class="a" style="left:432.7px;top:396.98px;width:92.6px;height:16.4px;border-radius:8.2px;background:#2e2752"></div>
<div class="a" style="left:432.7px;top:396.98px;width:17.7px;height:16.4px;border-radius:8.2px;background:#6a36de"></div>
<div class="t" style="left:453.4px;top:400.56px;font-size:9.2px;line-height:11.04px;font-weight:bold;font-style:normal;color:#eeeaf8;transform:scaleX(0.91);">5.75</div>
<div class="a" style="left:536.1px;top:396.98px;width:70.8px;height:16.4px;border-radius:8.2px;background:#2e2752"></div>
<div class="a" style="left:536.1px;top:396.98px;width:11.7px;height:16.4px;border-radius:50%;background:#6a36de"></div>
<div class="t" style="left:550.8px;top:400.56px;font-size:9.2px;line-height:11.04px;font-weight:bold;font-style:normal;color:#eeeaf8;transform:scaleX(0.91);">4.00</div>
<div class="a" style="left:617.3px;top:396.98px;width:92.4px;height:16.4px;border-radius:8.2px;background:#2e2752"></div>
<div class="a" style="left:617.3px;top:396.98px;width:11.2px;height:16.4px;border-radius:50%;background:#6a36de"></div>
<div class="t" style="left:631.5px;top:400.56px;font-size:9.2px;line-height:11.04px;font-weight:bold;font-style:normal;color:#eeeaf8;transform:scaleX(0.91);">7.75</div>
<div class="a" style="left:720.7px;top:396.98px;width:92.5px;height:16.4px;border-radius:8.2px;background:#2e2752"></div>
<div class="a" style="left:720.7px;top:396.98px;width:34.2px;height:16.4px;border-radius:8.2px;background:#6a36de"></div>
<div class="t" style="left:672.90px;width:80px;text-align:right;top:400.56px;font-size:9.2px;line-height:11.04px;font-weight:bold;color:#eeeaf8;transform:scaleX(0.91);transform-origin:100% 50%">9.75</div>
<div class="a" style="left:824.3px;top:396.98px;width:92px;height:16.4px;border-radius:8.2px;background:#2e2752"></div>
<div class="a" style="left:824.3px;top:396.98px;width:15.6px;height:16.4px;border-radius:50%;background:#6a36de"></div>
<div class="t" style="left:842.9px;top:400.56px;font-size:9.2px;line-height:11.04px;font-weight:bold;font-style:normal;color:#eeeaf8;transform:scaleX(0.91);">5.00</div>
<div class="a" style="left:13px;top:418.25px;width:104px;height:27.75px;background:#fbb28e;"></div>
<div class="a" style="left:117px;top:418.25px;width:103.5px;height:27.75px;background:#faf6cf;"></div>
<div class="a" style="left:13px;top:417.75px;width:207.5px;height:1px;background:rgba(0,0,0,0.22);"></div>
<div class="a" style="left:220.5px;top:416.75px;width:650px;height:1px;background:#1d2130;"></div>
<div class="a" style="left:220.5px;top:417.75px;width:650px;height:1px;background:#2b3143;"></div>
<svg class="a" style="left:0;top:0;overflow:visible" width="1" height="1"><polygon points="26.5,424.82 33.8,432.12 26.5,439.43 19.2,432.12" fill="#f59466" stroke="#f59466" stroke-width="0.8" stroke-linejoin="round"/></svg>
<div class="t" style="left:40.4px;top:428.23px;font-size:9px;line-height:10.80px;font-weight:bold;font-style:normal;color:rgba(255,255,255,0.8);transform:scaleX(0.88);">Tier-2</div>
<svg class="a" style="left:0;top:0;overflow:visible" width="1" height="1"><circle cx="168.1" cy="432.12" r="7.8" fill="#ebe516"/><line x1="168.1" y1="427.62" x2="168.1" y2="433.32" stroke="#f2ee96" stroke-width="1"/><circle cx="168.1" cy="435.43" r="0.6" fill="#f2ee96"/></svg>
<div class="t" style="left:225.7px;top:425.87px;font-size:9.6px;line-height:11.52px;font-weight:normal;font-style:normal;color:#e8eaf0;transform:scaleX(0.775);">AVANTOR PERFORMAN…</div>
<div class="t" style="left:328.7px;top:425.87px;font-size:9.6px;line-height:11.52px;font-weight:normal;font-style:normal;color:#e8eaf0;transform:scaleX(0.88);">Netherlands</div>
<div class="a" style="left:432.7px;top:424.73px;width:92.6px;height:16.4px;border-radius:8.2px;background:#2e2752"></div>
<div class="a" style="left:432.7px;top:424.73px;width:27.3px;height:16.4px;border-radius:8.2px;background:#6a36de"></div>
<div class="t" style="left:378.00px;width:80px;text-align:right;top:428.31px;font-size:9.2px;line-height:11.04px;font-weight:bold;color:#eeeaf8;transform:scaleX(0.91);transform-origin:100% 50%">8.00</div>
<div class="a" style="left:536.1px;top:424.73px;width:70.8px;height:16.4px;border-radius:8.2px;background:#2e2752"></div>
<div class="a" style="left:536.1px;top:424.73px;width:28.1px;height:16.4px;border-radius:8.2px;background:#6a36de"></div>
<div class="t" style="left:482.20px;width:80px;text-align:right;top:428.31px;font-size:9.2px;line-height:11.04px;font-weight:bold;color:#eeeaf8;transform:scaleX(0.91);transform-origin:100% 50%">8.25</div>
<div class="a" style="left:617.3px;top:424.73px;width:92.4px;height:16.4px;border-radius:8.2px;background:#2e2752"></div>
<div class="a" style="left:617.3px;top:424.73px;width:27.5px;height:16.4px;border-radius:8.2px;background:#6a36de"></div>
<div class="t" style="left:562.80px;width:80px;text-align:right;top:428.31px;font-size:9.2px;line-height:11.04px;font-weight:bold;color:#eeeaf8;transform:scaleX(0.91);transform-origin:100% 50%">11.25</div>
<div class="a" style="left:720.7px;top:424.73px;width:92.5px;height:16.4px;border-radius:8.2px;background:#2e2752"></div>
<div class="a" style="left:720.7px;top:424.73px;width:21.2px;height:16.4px;border-radius:8.2px;background:#6a36de"></div>
<div class="t" style="left:659.90px;width:80px;text-align:right;top:428.31px;font-size:9.2px;line-height:11.04px;font-weight:bold;color:#eeeaf8;transform:scaleX(0.91);transform-origin:100% 50%">6.50</div>
<div class="a" style="left:824.3px;top:424.73px;width:92px;height:16.4px;border-radius:8.2px;background:#2e2752"></div>
<div class="a" style="left:824.3px;top:424.73px;width:20px;height:16.4px;border-radius:8.2px;background:#6a36de"></div>
<div class="t" style="left:847.3px;top:428.31px;font-size:9.2px;line-height:11.04px;font-weight:bold;font-style:normal;color:#eeeaf8;transform:scaleX(0.91);">6.25</div>
<div class="a" style="left:13px;top:446.00px;width:104px;height:27.75px;background:#fbb28e;"></div>
<div class="a" style="left:117px;top:446.00px;width:103.5px;height:27.75px;background:#faf6cf;"></div>
<div class="a" style="left:13px;top:445.50px;width:207.5px;height:1px;background:rgba(0,0,0,0.22);"></div>
<div class="a" style="left:220.5px;top:444.50px;width:650px;height:1px;background:#1d2130;"></div>
<div class="a" style="left:220.5px;top:445.50px;width:650px;height:1px;background:#2b3143;"></div>
<svg class="a" style="left:0;top:0;overflow:visible" width="1" height="1"><polygon points="26.5,452.57 33.8,459.88 26.5,467.18 19.2,459.88" fill="#f59466" stroke="#f59466" stroke-width="0.8" stroke-linejoin="round"/></svg>
<div class="t" style="left:40.4px;top:455.98px;font-size:9px;line-height:10.80px;font-weight:bold;font-style:normal;color:rgba(255,255,255,0.8);transform:scaleX(0.88);">Tier-2</div>
<svg class="a" style="left:0;top:0;overflow:visible" width="1" height="1"><circle cx="168.1" cy="459.88" r="7.8" fill="#ebe516"/><line x1="168.1" y1="455.38" x2="168.1" y2="461.07" stroke="#f2ee96" stroke-width="1"/><circle cx="168.1" cy="463.18" r="0.6" fill="#f2ee96"/></svg>
<div class="t" style="left:225.7px;top:453.62px;font-size:9.6px;line-height:11.52px;font-weight:normal;font-style:normal;color:#e8eaf0;transform:scaleX(0.775);">AVANTOR PERFORMAN…</div>
<div class="t" style="left:328.7px;top:453.62px;font-size:9.6px;line-height:11.52px;font-weight:normal;font-style:normal;color:#e8eaf0;transform:scaleX(0.88);">Mexico</div>
<div class="a" style="left:432.7px;top:452.48px;width:92.6px;height:16.4px;border-radius:8.2px;background:#2e2752"></div>
<div class="a" style="left:432.7px;top:452.48px;width:52.3px;height:16.4px;border-radius:8.2px;background:#6a36de"></div>
<div class="t" style="left:403.00px;width:80px;text-align:right;top:456.06px;font-size:9.2px;line-height:11.04px;font-weight:bold;color:#eeeaf8;transform:scaleX(0.91);transform-origin:100% 50%">14.50</div>
<div class="a" style="left:536.1px;top:452.48px;width:70.8px;height:16.4px;border-radius:8.2px;background:#2e2752"></div>
<div class="a" style="left:536.1px;top:452.48px;width:21px;height:16.4px;border-radius:8.2px;background:#6a36de"></div>
<div class="t" style="left:475.10px;width:80px;text-align:right;top:456.06px;font-size:9.2px;line-height:11.04px;font-weight:bold;color:#eeeaf8;transform:scaleX(0.91);transform-origin:100% 50%">6.50</div>
<div class="a" style="left:617.3px;top:452.48px;width:92.4px;height:16.4px;border-radius:8.2px;background:#2e2752"></div>
<div class="a" style="left:617.3px;top:452.48px;width:82.7px;height:16.4px;border-radius:8.2px;background:#6a36de"></div>
<div class="t" style="left:618.00px;width:80px;text-align:right;top:456.06px;font-size:9.2px;line-height:11.04px;font-weight:bold;color:#eeeaf8;transform:scaleX(0.91);transform-origin:100% 50%">23.00</div>
<div class="a" style="left:720.7px;top:452.48px;width:92.5px;height:16.4px;border-radius:8.2px;background:#2e2752"></div>
<div class="a" style="left:720.7px;top:452.48px;width:38.5px;height:16.4px;border-radius:8.2px;background:#6a36de"></div>
<div class="t" style="left:677.20px;width:80px;text-align:right;top:456.06px;font-size:9.2px;line-height:11.04px;font-weight:bold;color:#eeeaf8;transform:scaleX(0.91);transform-origin:100% 50%">11.00</div>
<div class="a" style="left:824.3px;top:452.48px;width:92px;height:16.4px;border-radius:8.2px;background:#2e2752"></div>
<div class="a" style="left:824.3px;top:452.48px;width:60px;height:16.4px;border-radius:8.2px;background:#6a36de"></div>
<div class="a" style="left:13px;top:473.75px;width:104px;height:27.75px;background:#fbb28e;"></div>
<div class="a" style="left:117px;top:473.75px;width:103.5px;height:27.75px;background:#a7d08c;"></div>
<div class="a" style="left:13px;top:473.25px;width:207.5px;height:1px;background:rgba(0,0,0,0.22);"></div>
<div class="a" style="left:220.5px;top:472.25px;width:650px;height:1px;background:#1d2130;"></div>
<div class="a" style="left:220.5px;top:473.25px;width:650px;height:1px;background:#2b3143;"></div>
<svg class="a" style="left:0;top:0;overflow:visible" width="1" height="1"><polygon points="26.5,480.32 33.8,487.62 26.5,494.93 19.2,487.62" fill="#f59466" stroke="#f59466" stroke-width="0.8" stroke-linejoin="round"/></svg>
<div class="t" style="left:40.4px;top:483.73px;font-size:9px;line-height:10.80px;font-weight:bold;font-style:normal;color:rgba(255,255,255,0.8);transform:scaleX(0.88);">Tier-2</div>
<svg class="a" style="left:0;top:0;overflow:visible" width="1" height="1"><circle cx="168.1" cy="487.62" r="7.8" fill="#17963a"/></svg>
<div class="t" style="left:225.7px;top:481.37px;font-size:9.6px;line-height:11.52px;font-weight:normal;font-style:normal;color:#e8eaf0;transform:scaleX(0.775);">BOC GASES IRELAND L…</div>
<div class="t" style="left:328.7px;top:481.37px;font-size:9.6px;line-height:11.52px;font-weight:normal;font-style:normal;color:#e8eaf0;transform:scaleX(0.88);">Ireland</div>
<div class="a" style="left:432.7px;top:480.23px;width:92.6px;height:16.4px;border-radius:8.2px;background:#2e2752"></div>
<div class="a" style="left:432.7px;top:480.23px;width:17.7px;height:16.4px;border-radius:8.2px;background:#6a36de"></div>
<div class="t" style="left:453.4px;top:483.81px;font-size:9.2px;line-height:11.04px;font-weight:bold;font-style:normal;color:#eeeaf8;transform:scaleX(0.91);">5.75</div>
<div class="a" style="left:536.1px;top:480.23px;width:70.8px;height:16.4px;border-radius:8.2px;background:#2e2752"></div>
<div class="a" style="left:536.1px;top:480.23px;width:13.3px;height:16.4px;border-radius:50%;background:#6a36de"></div>
<div class="t" style="left:552.4px;top:483.81px;font-size:9.2px;line-height:11.04px;font-weight:bold;font-style:normal;color:#eeeaf8;transform:scaleX(0.91);">4.50</div>
<div class="a" style="left:617.3px;top:480.23px;width:92.4px;height:16.4px;border-radius:8.2px;background:#2e2752"></div>
<div class="a" style="left:617.3px;top:480.23px;width:11.4px;height:16.4px;border-radius:50%;background:#6a36de"></div>
<div class="t" style="left:631.7px;top:483.81px;font-size:9.2px;line-height:11.04px;font-weight:bold;font-style:normal;color:#eeeaf8;transform:scaleX(0.91);">7.75</div>
<div class="a" style="left:720.7px;top:480.23px;width:92.5px;height:16.4px;border-radius:8.2px;background:#2e2752"></div>
<div class="a" style="left:720.7px;top:480.23px;width:18.7px;height:16.4px;border-radius:8.2px;background:#6a36de"></div>
<div class="t" style="left:742.4px;top:483.81px;font-size:9.2px;line-height:11.04px;font-weight:bold;font-style:normal;color:#eeeaf8;transform:scaleX(0.91);">5.75</div>
<div class="a" style="left:824.3px;top:480.23px;width:92px;height:16.4px;border-radius:8.2px;background:#2e2752"></div>
<div class="a" style="left:824.3px;top:480.23px;width:16.7px;height:16.4px;border-radius:8.2px;background:#6a36de"></div>
<div class="t" style="left:844.0px;top:483.81px;font-size:9.2px;line-height:11.04px;font-weight:bold;font-style:normal;color:#eeeaf8;transform:scaleX(0.91);">5.25</div>
<div class="a" style="left:13px;top:501.50px;width:104px;height:27.75px;background:#fbb28e;"></div>
<div class="a" style="left:117px;top:501.50px;width:103.5px;height:27.75px;background:#faf6cf;"></div>
<div class="a" style="left:13px;top:501.00px;width:207.5px;height:1px;background:rgba(0,0,0,0.22);"></div>
<div class="a" style="left:220.5px;top:500.00px;width:650px;height:1px;background:#1d2130;"></div>
<div class="a" style="left:220.5px;top:501.00px;width:650px;height:1px;background:#2b3143;"></div>
<svg class="a" style="left:0;top:0;overflow:visible" width="1" height="1"><polygon points="26.5,508.07 33.8,515.38 26.5,522.67 19.2,515.38" fill="#f59466" stroke="#f59466" stroke-width="0.8" stroke-linejoin="round"/></svg>
<div class="t" style="left:40.4px;top:511.48px;font-size:9px;line-height:10.80px;font-weight:bold;font-style:normal;color:rgba(255,255,255,0.8);transform:scaleX(0.88);">Tier-2</div>
<svg class="a" style="left:0;top:0;overflow:visible" width="1" height="1"><circle cx="168.1" cy="515.38" r="7.8" fill="#ebe516"/><line x1="168.1" y1="510.88" x2="168.1" y2="516.58" stroke="#f2ee96" stroke-width="1"/><circle cx="168.1" cy="518.67" r="0.6" fill="#f2ee96"/></svg>
<div class="t" style="left:225.7px;top:509.12px;font-size:9.6px;line-height:11.52px;font-weight:normal;font-style:normal;color:#e8eaf0;transform:scaleX(0.775);">CABKA IPS</div>
<div class="t" style="left:328.7px;top:509.12px;font-size:9.6px;line-height:11.52px;font-weight:normal;font-style:normal;color:#e8eaf0;transform:scaleX(0.88);">Belgium</div>
<div class="a" style="left:432.7px;top:507.97px;width:92.6px;height:16.4px;border-radius:8.2px;background:#2e2752"></div>
<div class="a" style="left:432.7px;top:507.97px;width:27px;height:16.4px;border-radius:8.2px;background:#6a36de"></div>
<div class="t" style="left:377.70px;width:80px;text-align:right;top:511.56px;font-size:9.2px;line-height:11.04px;font-weight:bold;color:#eeeaf8;transform:scaleX(0.91);transform-origin:100% 50%">8.00</div>
<div class="a" style="left:536.1px;top:507.97px;width:70.8px;height:16.4px;border-radius:8.2px;background:#2e2752"></div>
<div class="a" style="left:536.1px;top:507.97px;width:23.7px;height:16.4px;border-radius:8.2px;background:#6a36de"></div>
<div class="t" style="left:477.80px;width:80px;text-align:right;top:511.56px;font-size:9.2px;line-height:11.04px;font-weight:bold;color:#eeeaf8;transform:scaleX(0.91);transform-origin:100% 50%">7.25</div>
<div class="a" style="left:617.3px;top:507.97px;width:92.4px;height:16.4px;border-radius:8.2px;background:#2e2752"></div>
<div class="a" style="left:617.3px;top:507.97px;width:34.8px;height:16.4px;border-radius:8.2px;background:#6a36de"></div>
<div class="t" style="left:570.10px;width:80px;text-align:right;top:511.56px;font-size:9.2px;line-height:11.04px;font-weight:bold;color:#eeeaf8;transform:scaleX(0.91);transform-origin:100% 50%">12.75</div>
<div class="a" style="left:720.7px;top:507.97px;width:92.5px;height:16.4px;border-radius:8.2px;background:#2e2752"></div>
<div class="a" style="left:720.7px;top:507.97px;width:23.7px;height:16.4px;border-radius:8.2px;background:#6a36de"></div>
<div class="t" style="left:662.40px;width:80px;text-align:right;top:511.56px;font-size:9.2px;line-height:11.04px;font-weight:bold;color:#eeeaf8;transform:scaleX(0.91);transform-origin:100% 50%">7.00</div>
<div class="a" style="left:824.3px;top:507.97px;width:92px;height:16.4px;border-radius:8.2px;background:#2e2752"></div>
<div class="a" style="left:824.3px;top:507.97px;width:29.7px;height:16.4px;border-radius:8.2px;background:#6a36de"></div>
<div class="t" style="left:772.00px;width:80px;text-align:right;top:511.56px;font-size:9.2px;line-height:11.04px;font-weight:bold;color:#eeeaf8;transform:scaleX(0.91);transform-origin:100% 50%">8.75</div>
<div class="a" style="left:13px;top:529.25px;width:104px;height:27.75px;background:#fbb28e;"></div>
<div class="a" style="left:117px;top:529.25px;width:103.5px;height:27.75px;background:#a7d08c;"></div>
<div class="a" style="left:13px;top:528.75px;width:207.5px;height:1px;background:rgba(0,0,0,0.22);"></div>
<div class="a" style="left:220.5px;top:527.75px;width:650px;height:1px;background:#1d2130;"></div>
<div class="a" style="left:220.5px;top:528.75px;width:650px;height:1px;background:#2b3143;"></div>
<svg class="a" style="left:0;top:0;overflow:visible" width="1" height="1"><polygon points="26.5,535.83 33.8,543.12 26.5,550.42 19.2,543.12" fill="#f59466" stroke="#f59466" stroke-width="0.8" stroke-linejoin="round"/></svg>
<div class="t" style="left:40.4px;top:539.23px;font-size:9px;line-height:10.80px;font-weight:bold;font-style:normal;color:rgba(255,255,255,0.8);transform:scaleX(0.88);">Tier-2</div>
<svg class="a" style="left:0;top:0;overflow:visible" width="1" height="1"><circle cx="168.1" cy="543.12" r="7.8" fill="#17963a"/></svg>
<div class="t" style="left:225.7px;top:536.87px;font-size:9.6px;line-height:11.52px;font-weight:normal;font-style:normal;color:#e8eaf0;transform:scaleX(0.775);">CHEMCO IRELAND LTD</div>
<div class="t" style="left:328.7px;top:536.87px;font-size:9.6px;line-height:11.52px;font-weight:normal;font-style:normal;color:#e8eaf0;transform:scaleX(0.88);">Ireland</div>
<div class="a" style="left:432.7px;top:535.72px;width:92.6px;height:16.4px;border-radius:8.2px;background:#2e2752"></div>
<div class="a" style="left:432.7px;top:535.72px;width:17.2px;height:16.4px;border-radius:8.2px;background:#6a36de"></div>
<div class="t" style="left:452.9px;top:539.31px;font-size:9.2px;line-height:11.04px;font-weight:bold;font-style:normal;color:#eeeaf8;transform:scaleX(0.91);">5.50</div>
<div class="a" style="left:536.1px;top:535.72px;width:70.8px;height:16.4px;border-radius:8.2px;background:#2e2752"></div>
<div class="a" style="left:536.1px;top:535.72px;width:12.8px;height:16.4px;border-radius:50%;background:#6a36de"></div>
<div class="t" style="left:551.9px;top:539.31px;font-size:9.2px;line-height:11.04px;font-weight:bold;font-style:normal;color:#eeeaf8;transform:scaleX(0.91);">4.25</div>
<div class="a" style="left:617.3px;top:535.72px;width:92.4px;height:16.4px;border-radius:8.2px;background:#2e2752"></div>
<div class="a" style="left:617.3px;top:535.72px;width:11.4px;height:16.4px;border-radius:50%;background:#6a36de"></div>
<div class="t" style="left:631.7px;top:539.31px;font-size:9.2px;line-height:11.04px;font-weight:bold;font-style:normal;color:#eeeaf8;transform:scaleX(0.91);">7.75</div>
<div class="a" style="left:720.7px;top:535.72px;width:92.5px;height:16.4px;border-radius:8.2px;background:#2e2752"></div>
<div class="a" style="left:720.7px;top:535.72px;width:18.7px;height:16.4px;border-radius:8.2px;background:#6a36de"></div>
<div class="t" style="left:742.4px;top:539.31px;font-size:9.2px;line-height:11.04px;font-weight:bold;font-style:normal;color:#eeeaf8;transform:scaleX(0.91);">5.75</div>
<div class="a" style="left:824.3px;top:535.72px;width:92px;height:16.4px;border-radius:8.2px;background:#2e2752"></div>
<div class="a" style="left:824.3px;top:535.72px;width:16.7px;height:16.4px;border-radius:8.2px;background:#6a36de"></div>
<div class="t" style="left:844.0px;top:539.31px;font-size:9.2px;line-height:11.04px;font-weight:bold;font-style:normal;color:#eeeaf8;transform:scaleX(0.91);">5.25</div>
<div class="a" style="left:13px;top:557.00px;width:104px;height:27.75px;background:#fbb28e;"></div>
<div class="a" style="left:117px;top:557.00px;width:103.5px;height:27.75px;background:#faf6cf;"></div>
<div class="a" style="left:13px;top:556.50px;width:207.5px;height:1px;background:rgba(0,0,0,0.22);"></div>
<div class="a" style="left:220.5px;top:555.50px;width:650px;height:1px;background:#1d2130;"></div>
<div class="a" style="left:220.5px;top:556.50px;width:650px;height:1px;background:#2b3143;"></div>
<svg class="a" style="left:0;top:0;overflow:visible" width="1" height="1"><polygon points="26.5,563.58 33.8,570.88 26.5,578.17 19.2,570.88" fill="#f59466" stroke="#f59466" stroke-width="0.8" stroke-linejoin="round"/></svg>
<div class="t" style="left:40.4px;top:566.98px;font-size:9px;line-height:10.80px;font-weight:bold;font-style:normal;color:rgba(255,255,255,0.8);transform:scaleX(0.88);">Tier-2</div>
<svg class="a" style="left:0;top:0;overflow:visible" width="1" height="1"><circle cx="168.1" cy="570.88" r="7.8" fill="#ebe516"/><line x1="168.1" y1="566.38" x2="168.1" y2="572.08" stroke="#f2ee96" stroke-width="1"/><circle cx="168.1" cy="574.17" r="0.6" fill="#f2ee96"/></svg>
<div class="t" style="left:225.7px;top:564.62px;font-size:9.6px;line-height:11.52px;font-weight:normal;font-style:normal;color:#e8eaf0;transform:scaleX(0.775);">DEAD SEA WORKS LTD.</div>
<div class="t" style="left:328.7px;top:564.62px;font-size:9.6px;line-height:11.52px;font-weight:normal;font-style:normal;color:#e8eaf0;transform:scaleX(0.88);">Israel</div>
<div class="a" style="left:432.7px;top:563.47px;width:92.6px;height:16.4px;border-radius:8.2px;background:#2e2752"></div>
<div class="a" style="left:432.7px;top:563.47px;width:43.1px;height:16.4px;border-radius:8.2px;background:#6a36de"></div>
<div class="t" style="left:393.80px;width:80px;text-align:right;top:567.06px;font-size:9.2px;line-height:11.04px;font-weight:bold;color:#eeeaf8;transform:scaleX(0.91);transform-origin:100% 50%">12.25</div>
<div class="a" style="left:536.1px;top:563.47px;width:70.8px;height:16.4px;border-radius:8.2px;background:#2e2752"></div>
<div class="a" style="left:536.1px;top:563.47px;width:20px;height:16.4px;border-radius:8.2px;background:#6a36de"></div>
<div class="t" style="left:559.1px;top:567.06px;font-size:9.2px;line-height:11.04px;font-weight:bold;font-style:normal;color:#eeeaf8;transform:scaleX(0.91);">6.25</div>
<div class="a" style="left:617.3px;top:563.47px;width:92.4px;height:16.4px;border-radius:8.2px;background:#2e2752"></div>
<div class="a" style="left:617.3px;top:563.47px;width:46.4px;height:16.4px;border-radius:8.2px;background:#6a36de"></div>
<div class="t" style="left:581.70px;width:80px;text-align:right;top:567.06px;font-size:9.2px;line-height:11.04px;font-weight:bold;color:#eeeaf8;transform:scaleX(0.91);transform-origin:100% 50%">15.25</div>
<div class="a" style="left:720.7px;top:563.47px;width:92.5px;height:16.4px;border-radius:8.2px;background:#2e2752"></div>
<div class="a" style="left:720.7px;top:563.47px;width:70.3px;height:16.4px;border-radius:8.2px;background:#6a36de"></div>
<div class="t" style="left:709.00px;width:80px;text-align:right;top:567.06px;font-size:9.2px;line-height:11.04px;font-weight:bold;color:#eeeaf8;transform:scaleX(0.91);transform-origin:100% 50%">19.25</div>
<div class="a" style="left:824.3px;top:563.47px;width:92px;height:16.4px;border-radius:8.2px;background:#2e2752"></div>
<div class="a" style="left:824.3px;top:563.47px;width:60px;height:16.4px;border-radius:8.2px;background:#6a36de"></div>
<div class="t" style="left:802.30px;width:80px;text-align:right;top:567.06px;font-size:9.2px;line-height:11.04px;font-weight:bold;color:#eeeaf8;transform:scaleX(0.91);transform-origin:100% 50%">15.25</div>
<div class="a" style="left:13px;top:584.75px;width:857px;height:0.5px;background:#2b3142;"></div></body></html>
